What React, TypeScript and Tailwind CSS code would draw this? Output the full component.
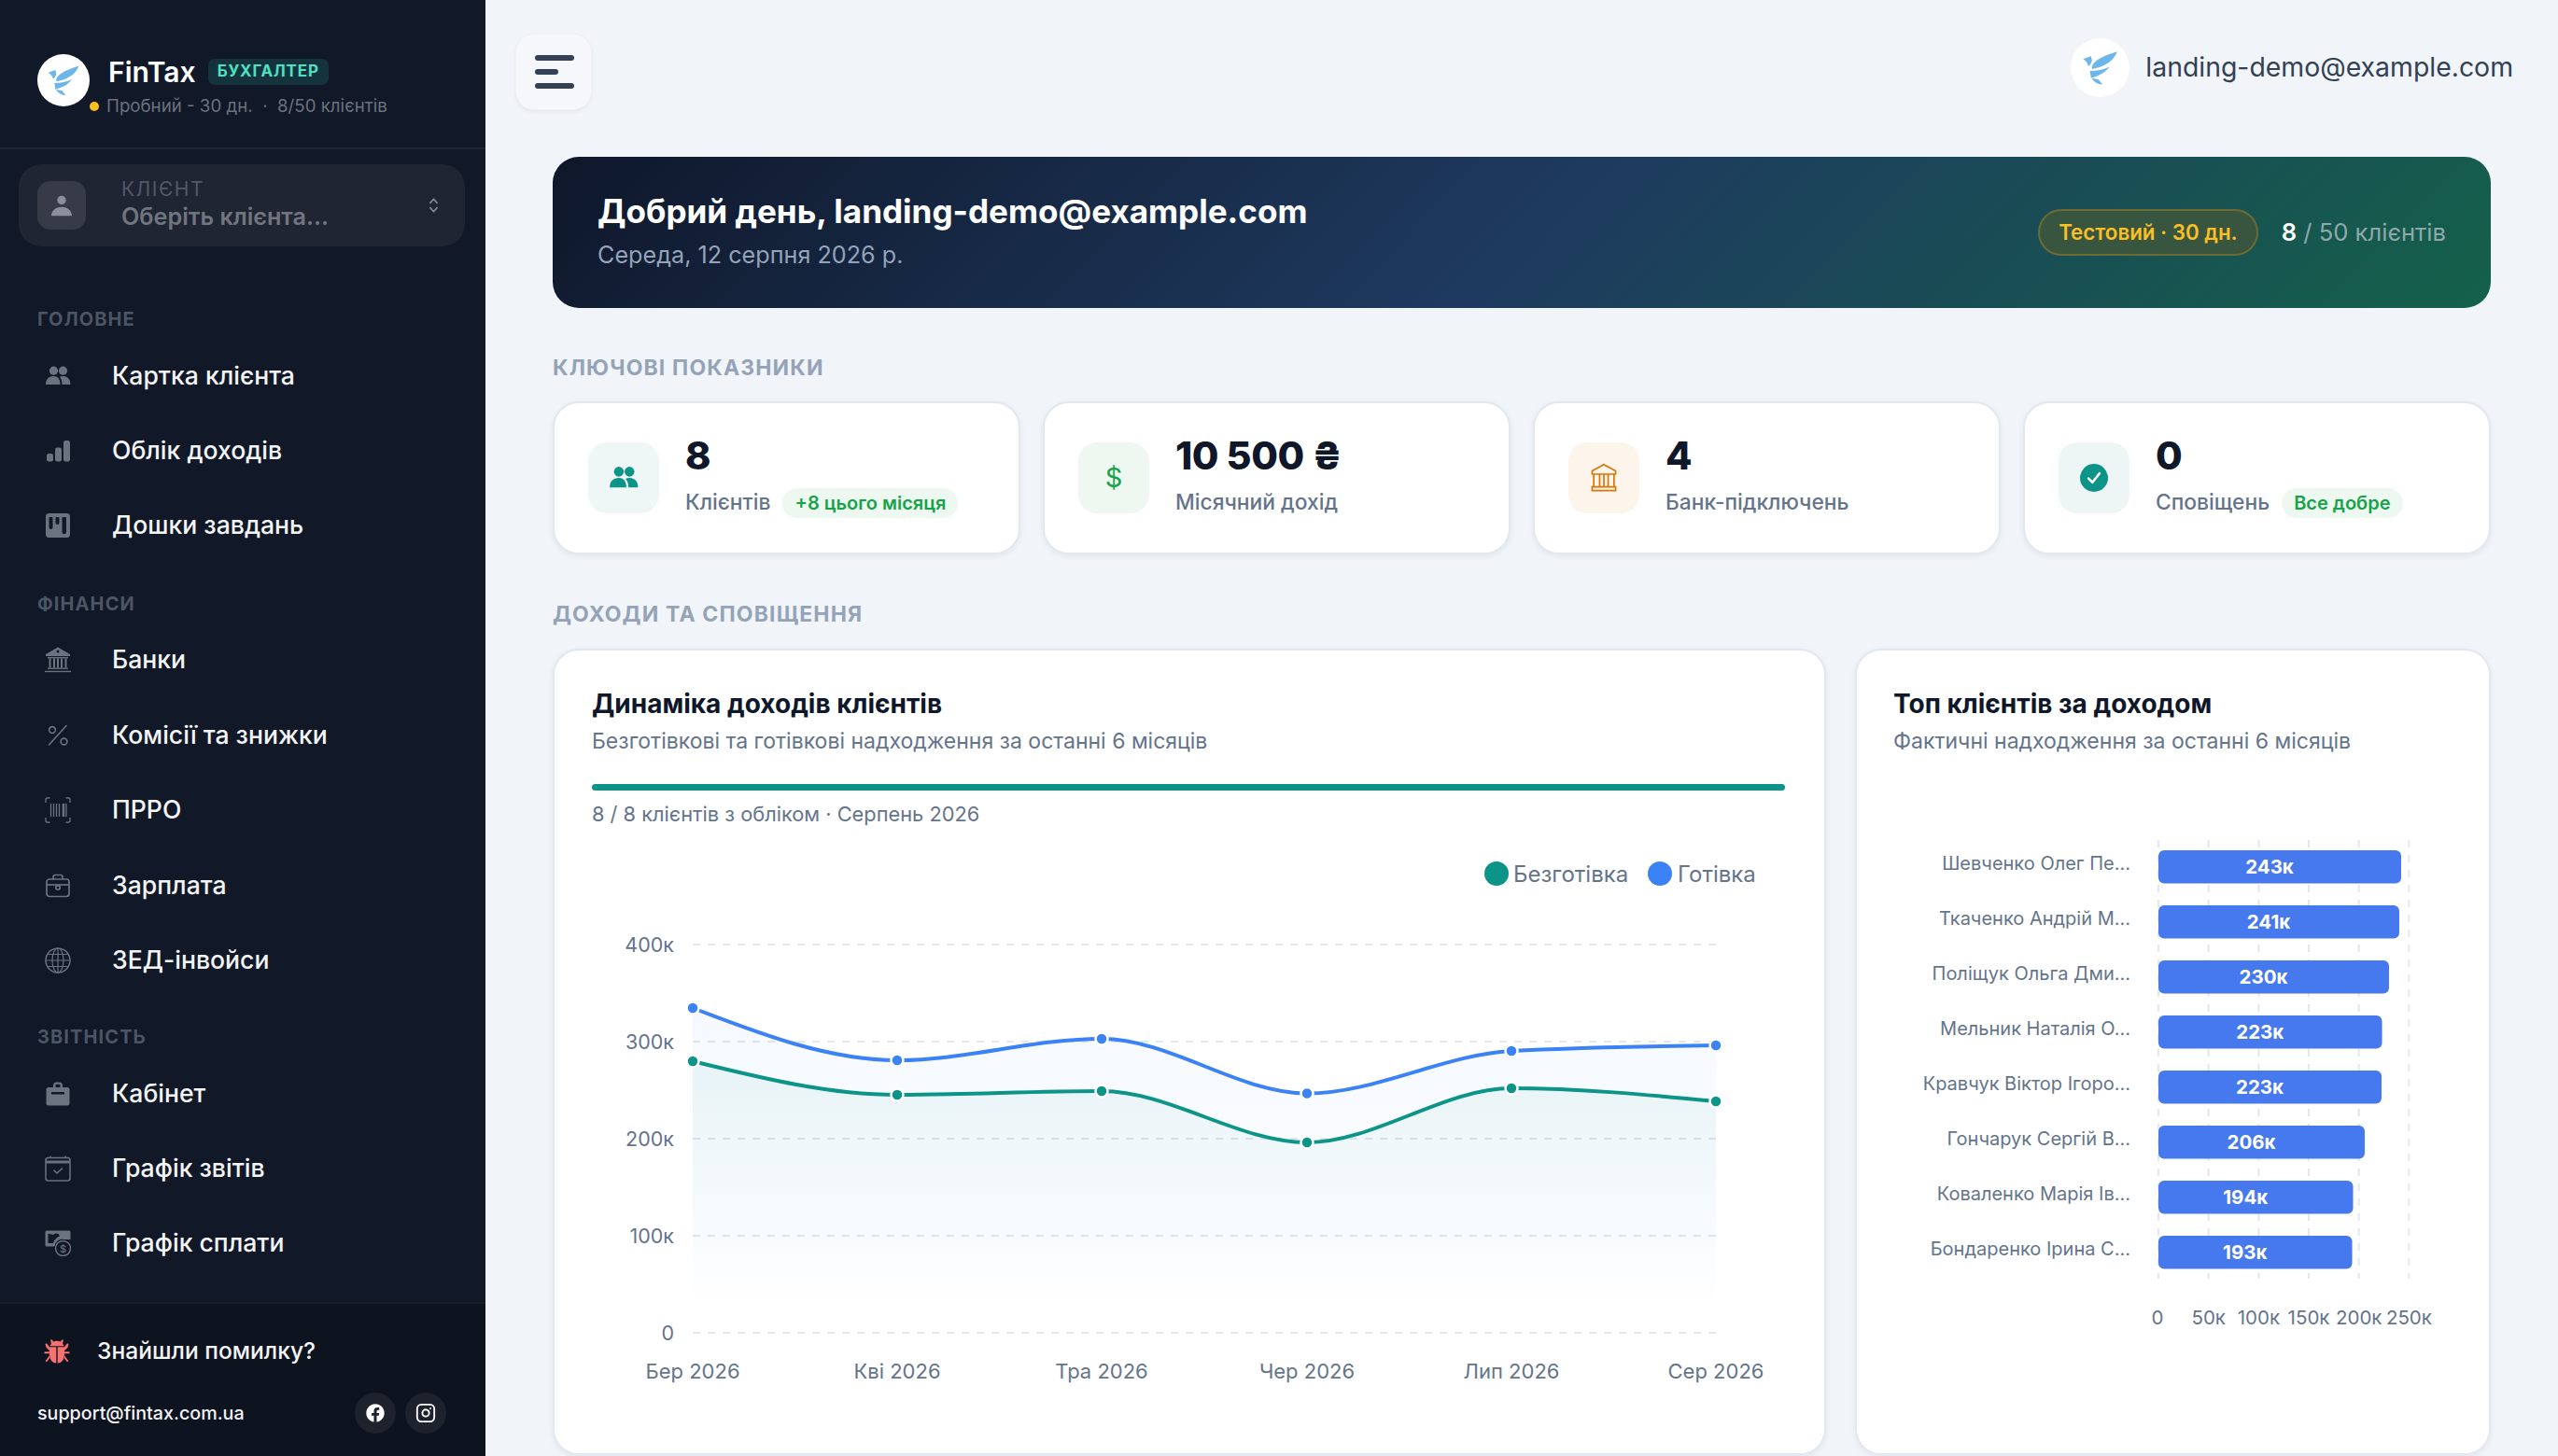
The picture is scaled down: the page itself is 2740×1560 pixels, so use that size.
import React from "react";
import { FaFacebook } from "react-icons/fa";
import { Instagram } from "lucide-react";

type IconProps = { className?: string };

const Logo = ({ className }: IconProps) => (
  <svg viewBox="30 24 168 168" className={className}>
    <circle cx="114" cy="108" r="84" fill="#ffffff" />
    <g fill="#6cb6e9">
      <path d="M65 83 L88 75 L91 88 C89 96 85 101 80 104 C80 96 74 88 65 83Z" />
      <path d="M163 62 C153 88 130 104 91 112 C88 96 106 79 163 62Z" />
      <path d="M141 105 C127 124 110 131 88 137 L85 117 C105 117 125 113 141 105Z" />
      <path d="M90 138 L109 141 L121 156 C108 156 97 150 90 138Z" />
    </g>
  </svg>
);

const People = ({ className }: IconProps) => (
  <svg viewBox="0 0 28 28" fill="currentColor" className={className}>
    <circle cx="9.5" cy="8.2" r="4.6" />
    <circle cx="19.5" cy="8.2" r="4.6" />
    <path d="M1 23 C1 17 4.5 14 9.5 14 C14.5 14 16.5 18 16.5 23Z" />
    <path d="M18.5 23 C18.5 19 17.5 16.5 15.8 14.8 C17 14.2 18.2 14 19.5 14 C24 14 27.5 17 27.5 23Z" />
  </svg>
);

const Bars = ({ className }: IconProps) => (
  <svg viewBox="0 0 28 28" fill="currentColor" className={className}>
    <rect x="2" y="17" width="7" height="8.5" rx="2.2" />
    <rect x="11" y="10.5" width="7" height="15" rx="2.2" />
    <rect x="20" y="3" width="7" height="22.5" rx="2.2" />
  </svg>
);

const Kanban = ({ className }: IconProps) => (
  <svg viewBox="0 0 28 28" fill="currentColor" className={className}>
    <path
      fillRule="evenodd"
      d="M4.5 1 H23.5 A3.5 3.5 0 0 1 27 4.500 V23.5 A3.500 3.500 0 0 1 23.500 27 H4.500 A3.500 3.500 0 0 1 1 23.500 V4.500 A3.500 3.500 0 0 1 4.500 1Z M5.500 5 A1 1 0 0 0 4.500 6 V16 A1.500 1.500 0 0 0 8.500 16 V6 A1 1 0 0 0 7.500 5Z M12.500 5 A1 1 0 0 0 11.500 6 V11 A1.500 1.500 0 0 0 15.500 11 V6 A1 1 0 0 0 14.500 5Z M19.500 5 A1 1 0 0 0 18.500 6 V21 A1.500 1.500 0 0 0 23 21 V6 A1 1 0 0 0 22 5Z"
    />
  </svg>
);

const BankFilled = ({ className }: IconProps) => (
  <svg viewBox="0 0 28 28" fill="currentColor" className={className}>
    <path
      fillRule="evenodd"
      d="M14 0.500 L27 8 V10 H1 V8Z M14 3.500 A1.500 1.500 0 1 0 14 6.500 A1.500 1.500 0 1 0 14 3.500Z"
    />
    <rect x="3" y="11" width="22" height="1.400" />
    <rect x="4.500" y="12.500" width="2" height="10" />
    <rect x="9" y="12.500" width="2" height="10" />
    <rect x="13" y="12.500" width="2" height="10" />
    <rect x="17" y="12.500" width="2" height="10" />
    <rect x="21.500" y="12.500" width="2" height="10" />
    <rect x="3" y="22.500" width="22" height="1.400" />
    <rect x="0" y="25.800" width="28" height="1.400" />
  </svg>
);

const Percent = ({ className }: IconProps) => (
  <svg viewBox="0 0 28 28" fill="none" stroke="currentColor" strokeWidth="1.600" className={className}>
    <circle cx="8" cy="8" r="3.400" />
    <circle cx="20.500" cy="20.500" r="3.400" />
    <path d="M23 3.500 L4.500 24" strokeLinecap="round" />
  </svg>
);

const Barcode = ({ className }: IconProps) => (
  <svg viewBox="0 0 28 28" fill="none" stroke="currentColor" strokeWidth="1.300" className={className}>
    <path d="M5.500 1 H2.500 A1.500 1.500 0 0 0 1 2.500 V6" />
    <path d="M22.500 1 H25.500 A1.500 1.500 0 0 1 27 2.500 V6" />
    <path d="M5.500 27 H2.500 A1.500 1.500 0 0 1 1 25.500 V22" />
    <path d="M22.500 27 H25.500 A1.500 1.500 0 0 0 27 25.500 V22" />
    <path d="M6.500 7 V21 M9.500 7 V21 M12.500 7 V21 M15.500 7 V21" />
    <path d="M20 7 V21" strokeWidth="2.600" />
    <path d="M23 7 V21" />
  </svg>
);

const Case = ({ className }: IconProps) => (
  <svg viewBox="0 0 28 28" fill="none" stroke="currentColor" strokeWidth="1.700" className={className}>
    <rect x="2" y="7" width="24" height="18.500" rx="3" />
    <path d="M9 7 V4.500 A2 2 0 0 1 11 2.500 H17 A2 2 0 0 1 19 4.500 V7" />
    <path d="M2 13 H26" />
    <circle cx="14" cy="16" r="2.200" />
  </svg>
);

const Globe = ({ className }: IconProps) => (
  <svg viewBox="0 0 28 28" fill="none" stroke="currentColor" strokeWidth="1.200" className={className}>
    <circle cx="14" cy="14" r="13" strokeWidth="1.500" />
    <ellipse cx="14" cy="14" rx="6" ry="13" />
    <path d="M14 1 V27 M1 14 H27 M3 7.500 H25 M3 20.500 H25" />
  </svg>
);

const CaseFilled = ({ className }: IconProps) => (
  <svg viewBox="0 0 28 28" fill="currentColor" className={className}>
    <path
      fillRule="evenodd"
      d="M9 7 V5 A3.500 3.500 0 0 1 12.500 1.500 H15.500 A3.500 3.500 0 0 1 19 5 V7 H24 A2.500 2.500 0 0 1 26.500 9.500 V24 A2.500 2.500 0 0 1 24 26.500 H4 A2.500 2.500 0 0 1 1.500 24 V9.500 A2.500 2.500 0 0 1 4 7Z M11.500 7 H16.500 V5 A1.200 1.200 0 0 0 15.300 3.800 H12.700 A1.200 1.200 0 0 0 11.500 5Z M7 12 V14.500 H21 V12Z"
    />
  </svg>
);

const Calendar = ({ className }: IconProps) => (
  <svg viewBox="0 0 28 28" fill="none" stroke="currentColor" strokeWidth="1.500" className={className}>
    <rect x="1" y="2.500" width="26" height="24.500" rx="2.500" />
    <path d="M1 7 H27" strokeWidth="3" />
    <path d="M6 0.500 V3 M22 0.500 V3" />
    <path d="M10 16 L13 19 L18.500 14" strokeLinecap="round" strokeLinejoin="round" />
  </svg>
);

const Money = ({ className }: IconProps) => (
  <svg viewBox="0 0 28 28" className={className}>
    <path
      fill="currentColor"
      fillRule="evenodd"
      d="M2 0.500 H26 A1.500 1.500 0 0 1 27.500 2 V10 H20 A8 8 0 0 0 10.500 17.500 H2 A1.500 1.500 0 0 1 0.500 16 V2 A1.500 1.500 0 0 1 2 0.500Z M3.500 4 V14 H9 C10 10 13 7.500 16 6.500 A4 4 0 0 0 9 5 C8 4.500 5 4 3.500 4Z"
    />
    <circle cx="19.500" cy="19.500" r="8" fill="none" stroke="currentColor" strokeWidth="1.400" />
    <text x="19.500" y="23.500" textAnchor="middle" fontSize="11" fill="currentColor" fontFamily="Inter">$</text>
  </svg>
);

const Bug = ({ className }: IconProps) => (
  <svg viewBox="0 0 28 28" fill="currentColor" className={className}>
    <path d="M8 7 L7 2.500 L9 2.500 L10 4.500 C12 3.500 16 3.500 18 4.500 L19 2.500 L21 2.500 L20 7 C20.800 7.500 21.300 8 21.500 9.300 H6.500 C6.700 8 7.200 7.500 8 7Z" />
    <path d="M6 10.200 H13.300 V27.500 C8.500 27.500 6 23 6 18Z" />
    <path d="M14.700 10.200 H22 V18 C22 23 19.500 27.500 14.700 27.500Z" />
    <path d="M1.500 7 L3 6.300 L6 10.500 V14 L2.500 10.800Z M0.500 15.200 H6 V17.300 H0.500Z M6 19.300 V22.500 L3 26.300 L1.600 25.300Z" />
    <path d="M26.500 7 L25 6.300 L22 10.500 V14 L25.500 10.800Z M27.500 15.200 H22 V17.300 H27.500Z M22 19.300 V22.500 L25 26.300 L26.400 25.300Z" />
  </svg>
);

const BankLine = ({ className }: IconProps) => (
  <svg viewBox="0 0 28 28" fill="none" stroke="currentColor" strokeWidth="1.500" className={className}>
    <path d="M14 1.500 L25 7.500 V10.500 H3 V7.500Z" strokeLinejoin="round" />
    <path d="M4.500 10.500 V22 M23.500 10.500 V22 M10 10.500 V22 M14 10.500 V22 M18 10.500 V22" />
    <path d="M3 22.500 H25 V26 H3Z" />
  </svg>
);

const Check = ({ className }: IconProps) => (
  <svg viewBox="0 0 28 28" className={className}>
    <circle cx="14" cy="14" r="14" fill="currentColor" />
    <path d="M8.500 14.500 L12.500 18.500 L19.500 9.500" fill="none" stroke="#fff" strokeWidth="2.400" strokeLinecap="round" strokeLinejoin="round" />
  </svg>
);

const NavItem = ({ icon, label, tall }: { icon: React.ReactNode; label: string; tall?: boolean }) => (
  <div className={`${tall ? "h-[80.5px]" : "h-[80px]"} flex items-center pl-[48px] gap-[44px] text-[#f3f4f6] text-[26.6px] font-medium shrink-0`}>
    <span className="w-[28px] h-[28px] text-[#6b7280] flex items-center justify-center shrink-0">{icon}</span>
    <span>{label}</span>
  </div>
);

const SectionLabel = ({ children, className }: { children: string; className: string }) => (
  <div className={`${className} flex items-end pl-[40px] text-[20px] leading-[24px] font-bold tracking-[1.1px] text-[#4b5563] shrink-0`}>
    {children}
  </div>
);

const ic = "w-[28px] h-[28px]";

const Sidebar = () => (
  <aside className="w-[520px] h-full shrink-0 bg-[#111827] flex flex-col">
    <div className="h-[160px] shrink-0 border-b-2 border-[#1f2531] pl-[40px] flex items-start pt-[58px] relative">
      <Logo className="w-[56px] h-[56px] shrink-0" />
      <div className="ml-[20px]">
        <div className="flex items-center h-[38px]">
          <span className="text-[30px] leading-[38px] font-semibold text-white">FinTax</span>
          <span className="ml-[13px] h-[28px] px-[10px] rounded-[7px] bg-[#15333c] text-[#4fe0c4] text-[17px] font-bold tracking-[0.8px] flex items-center">
            БУХГАЛТЕР
          </span>
        </div>
        <div className="flex items-center text-[18.7px] leading-[30px] text-[#6b7280] -ml-[20px] mt-[3px]">
          <span className="w-[10px] h-[10px] rounded-full bg-[#fbbf24] mr-[8px]" />
          <span className="whitespace-pre">Пробний - 30 дн.  ·  8/50 клієнтів</span>
        </div>
      </div>
    </div>

    <div className="ml-[20px] mr-[22px] mt-[16px] h-[88px] shrink-0 rounded-[24px] bg-[#1f2532] flex items-center pl-[20px] pr-[28px]">
      <div className="w-[52px] h-[52px] rounded-[14px] bg-[#363b47] flex items-center justify-center text-[#8b8f99]">
        <svg viewBox="0 0 28 28" fill="currentColor" className="w-[26px] h-[26px]">
          <circle cx="14" cy="8" r="5" />
          <path d="M2 26 C3 19 8 16 14 16 C20 16 25 19 26 26Z" />
        </svg>
      </div>
      <div className="ml-[38px] flex-1">
        <div className="text-[21px] leading-[24px] tracking-[1.5px] text-[#525866]">КЛІЄНТ</div>
        <div className="text-[25.2px] leading-[34px] font-semibold text-[#71757f]">Оберіть клієнта...</div>
      </div>
      <svg viewBox="0 0 12 20" fill="none" stroke="#7e828c" strokeWidth="2" className="w-[11px] h-[18px]" strokeLinecap="round" strokeLinejoin="round">
        <path d="M2 7 L6 2.500 L10 7 M2 13 L6 17.500 L10 13" />
      </svg>
    </div>

    <SectionLabel className="h-[99px] pb-[9px]">ГОЛОВНЕ</SectionLabel>
    <NavItem icon={<People className={ic} />} label="Картка клієнта" />
    <NavItem icon={<Bars className={ic} />} label="Облік доходів" />
    <NavItem icon={<Kanban className={ic} />} label="Дошки завдань" />

    <SectionLabel className="h-[64px] pb-[8px]">ФІНАНСИ</SectionLabel>
    <NavItem tall icon={<BankFilled className={ic} />} label="Банки" />
    <NavItem tall icon={<Percent className={ic} />} label="Комісії та знижки" />
    <NavItem tall icon={<Barcode className={ic} />} label="ПРРО" />
    <NavItem tall icon={<Case className={ic} />} label="Зарплата" />
    <NavItem tall icon={<Globe className={ic} />} label="ЗЕД-інвойси" />

    <SectionLabel className="h-[62px] pb-[9px]">ЗВІТНІСТЬ</SectionLabel>
    <NavItem icon={<CaseFilled className={ic} />} label="Кабінет" />
    <NavItem icon={<Calendar className={ic} />} label="Графік звітів" />
    <NavItem icon={<Money className={ic} />} label="Графік сплати" />

    <div className="mt-auto h-[165px] shrink-0 border-t-2 border-[#1c2029] bg-[#0e1320] pl-[40px] pr-[42px] pt-[28px]">
      <div className="flex items-center h-[44px] pl-[7px] gap-[29px] text-[24.6px] font-medium text-[#f3f4f6]">
        <Bug className="w-[28px] h-[28px] text-[#f87171]" />
        <span>Знайшли помилку?</span>
      </div>
      <div className="flex items-center mt-[23px] h-[44px]">
        <span className="text-[19.7px] font-medium text-[#f3f4f6] pt-[2px]">support@fintax.com.ua</span>
        <div className="ml-auto flex gap-[10px]">
          <span className="w-[44px] h-[44px] rounded-full bg-[#1d222d] flex items-center justify-center text-white">
            <FaFacebook className="w-[20px] h-[20px]" />
          </span>
          <span className="w-[44px] h-[44px] rounded-full bg-[#1d222d] flex items-center justify-center text-white">
            <Instagram className="w-[22px] h-[22px]" />
          </span>
        </div>
      </div>
    </div>
  </aside>
);

const Stat = ({
  icon,
  box,
  value,
  label,
  pill,
}: {
  icon: React.ReactNode;
  box: string;
  value: string;
  label: string;
  pill?: string;
}) => (
  <div className="h-[164px] rounded-[28px] bg-white border-2 border-[#e2e8f0] shadow-[0_2px_6px_rgba(15,23,42,0.07)] flex items-center pl-[36px]">
    <div className={`${box} w-[76px] h-[76px] rounded-[20px] flex items-center justify-center shrink-0`}>{icon}</div>
    <div className="ml-[28px] pb-[7px]">
      <div className="text-[41.5px] leading-[50px] font-extrabold text-[#0f172a] tracking-[-0.5px]">{value}</div>
      <div className="flex items-center h-[32px] mt-[10px]">
        <span className="text-[22.8px] font-medium text-[#64748b]">{label}</span>
        {pill && (
          <span className="ml-[13px] h-[32px] px-[13px] rounded-full bg-[#edf8f0] text-[#16a34a] text-[20px] font-semibold flex items-center">
            {pill}
          </span>
        )}
      </div>
    </div>
  </div>
);

function monotonePath(xs: number[], ys: number[]) {
  const n = xs.length;
  const h = xs.slice(1).map((x, i) => x - xs[i]);
  const s = h.map((hi, i) => (ys[i + 1] - ys[i]) / hi);
  const t: number[] = new Array(n).fill(0);
  for (let i = 1; i < n - 1; i++) {
    const p = (s[i - 1] * h[i] + s[i] * h[i - 1]) / (h[i - 1] + h[i]);
    t[i] = (Math.sign(s[i - 1]) + Math.sign(s[i])) * Math.min(Math.abs(s[i - 1]), Math.abs(s[i]), 0.5 * Math.abs(p));
  }
  t[0] = (3 * s[0] - t[1]) / 2;
  t[n - 1] = (3 * s[n - 2] - t[n - 2]) / 2;
  let d = `M${xs[0]},${ys[0]}`;
  for (let i = 0; i < n - 1; i++) {
    const dx = h[i] / 3;
    d += ` C${xs[i] + dx},${ys[i] + dx * t[i]} ${xs[i + 1] - dx},${ys[i + 1] - dx * t[i + 1]} ${xs[i + 1]},${ys[i + 1]}`;
  }
  return d;
}

const xs = [742, 961, 1180, 1400, 1619, 1838];
const blue = [1080, 1136, 1113, 1171.5, 1126, 1120];
const green = [1137, 1173, 1169, 1224, 1166, 1180];
const months = ["Бер 2026", "Кві 2026", "Тра 2026", "Чер 2026", "Лип 2026", "Сер 2026"];
const yTicks: [string, number][] = [
  ["400к", 1012],
  ["300к", 1116],
  ["200к", 1220],
  ["100к", 1324],
  ["0", 1428],
];

const LineChart = () => {
  const bluePath = monotonePath(xs, blue);
  const greenPath = monotonePath(xs, green);
  return (
    <svg viewBox="634 900 1278 600" className="w-[1278px] h-[600px] block" fontFamily="Inter">
      <defs>
        <linearGradient id="gb" x1="0" y1="0" x2="0" y2="1">
          <stop offset="0%" stopColor="#3b82f6" stopOpacity="0.05" />
          <stop offset="100%" stopColor="#3b82f6" stopOpacity="0" />
        </linearGradient>
        <linearGradient id="gg" x1="0" y1="0" x2="0" y2="1">
          <stop offset="0%" stopColor="#0d9488" stopOpacity="0.065" />
          <stop offset="85%" stopColor="#0d9488" stopOpacity="0" />
        </linearGradient>
      </defs>
      <circle cx="1603" cy="936" r="13" fill="#0d9488" />
      <text x="1621" y="945" fontSize="24" fill="#64748b">Безготівка</text>
      <circle cx="1778" cy="936" r="13" fill="#3b82f6" />
      <text x="1797" y="945" fontSize="24" fill="#64748b">Готівка</text>
      {yTicks.map(([l, y]) => (
        <g key={l}>
          <line x1="742" x2="1838" y1={y} y2={y} stroke="#e2e8f0" strokeWidth="2" strokeDasharray="8 8" />
          <text x="722" y={y + 8} textAnchor="end" fontSize="21.500" fill="#64748b">{l}</text>
        </g>
      ))}
      <path d={`${bluePath} L1838,1428 L742,1428 Z`} fill="url(#gb)" />
      <path d={`${greenPath} L1838,1428 L742,1428 Z`} fill="url(#gg)" />
      <path d={bluePath} fill="none" stroke="#3b82f6" strokeWidth="4" />
      <path d={greenPath} fill="none" stroke="#0d9488" strokeWidth="4" />
      {xs.map((x, i) => (
        <g key={x}>
          <circle cx={x} cy={blue[i]} r="6.500" fill="#3b82f6" stroke="#fff" strokeWidth="2.500" />
          <circle cx={x} cy={green[i]} r="6.500" fill="#0d9488" stroke="#fff" strokeWidth="2.500" />
          <text x={x} y="1477" textAnchor="middle" fontSize="22" fill="#64748b">{months[i]}</text>
        </g>
      ))}
    </svg>
  );
};

const rows: [string, string, number][] = [
  ["Шевченко Олег Пе...", "243к", 260],
  ["Ткаченко Андрій М...", "241к", 258],
  ["Поліщук Ольга Дми...", "230к", 247],
  ["Мельник Наталія О...", "223к", 239.500],
  ["Кравчук Віктор Ігоро...", "223к", 239],
  ["Гончарук Сергій В...", "206к", 221],
  ["Коваленко Марія Ів...", "194к", 208.500],
  ["Бондаренко Ірина С...", "193к", 207.500],
];
const gridX = [2312, 2365.700, 2419.400, 2473, 2526.700, 2580.400];
const gridLabels = ["0", "50к", "100к", "150к", "200к", "250к"];

const BarChart = () => (
  <svg viewBox="2029 880 596 560" className="w-[596px] h-[560px] block" fontFamily="Inter">
    {gridX.map((x, i) => (
      <g key={x}>
        <line x1={x} x2={x} y1="900" y2="1370" stroke="#e2e8f0" strokeWidth="2" strokeDasharray="8 8" />
        <text x={i === 0 ? x - 1 : x} y="1419" textAnchor="middle" fontSize="20.500" fill="#64748b">{gridLabels[i]}</text>
      </g>
    ))}
    {rows.map(([name, val, w], i) => {
      const y = 911 + i * 59;
      return (
        <g key={name}>
          <text x="2282" y={y + 21} textAnchor="end" fontSize="20" fill="#64748b">{name}</text>
          <rect x="2312" y={y} width={w} height="35.500" rx="6" fill="#4678ee" />
          <text x={2312 + w / 2 - 11} y={y + 25} textAnchor="middle" fontSize="20.500" fontWeight="700" fill="#fff">{val}</text>
        </g>
      );
    })}
  </svg>
);

const PanelHead = ({ title, sub }: { title: string; sub: string }) => (
  <>
    <div className="text-[28px] leading-[38px] font-bold text-[#0f172a]">{title}</div>
    <div className="text-[23px] leading-[34px] mt-[4px] text-[#64748b]">{sub}</div>
  </>
);

const Heading = ({ children, className }: { children: string; className: string }) => (
  <div className={`${className} text-[23px] leading-[28px] font-bold tracking-[1.15px] text-[#94a3b8]`}>{children}</div>
);

export default function App() {
  return (
    <div className="w-[2740px] h-[1560px] overflow-hidden flex bg-[#f1f5f9] font-['Inter',sans-serif]">
      <Sidebar />
      <main className="flex-1 min-w-0 h-full flex flex-col">
        <div className="pt-[36px] pl-[32px] pr-[48px] flex items-start justify-between shrink-0">
          <button className="w-[82px] h-[82px] rounded-[20px] bg-[#f5f7fb] border border-[#eef1f6] shadow-[0_2px_4px_rgba(15,23,42,0.06)] flex flex-col justify-center items-start pl-[20px] gap-[9px]">
            <span className="w-[42px] h-[6px] rounded-full bg-[#334155]" />
            <span className="w-[25px] h-[6px] rounded-full bg-[#334155]" />
            <span className="w-[42px] h-[6px] rounded-full bg-[#334155]" />
          </button>
          <div className="flex items-center gap-[17px] mt-[4px] h-[64px]">
            <Logo className="w-[63px] h-[63px]" />
            <span className="text-[28.4px] text-[#334155]">landing-demo@example.com</span>
          </div>
        </div>

        <div className="px-[72px]">
          <div className="mt-[50px] h-[162px] rounded-[28px] bg-[linear-gradient(135deg,#0f172a_0%,#1e3a5f_50%,#14614a_100%)] flex items-center justify-between px-[48px]">
            <div className="pb-[6px]">
              <div className="text-[35.1px] leading-[46px] font-bold text-white">Добрий день, landing-demo@example.com</div>
              <div className="text-[25.2px] leading-[34px] mt-[7px] text-[#94a3b8]">Середа, 12 серпня 2026 р.</div>
            </div>
            <div className="flex items-center gap-[25px]">
              <span className="h-[50px] px-[20px] rounded-full border-2 border-[#6e6a34] bg-[#38563f] text-[#fbbf24] text-[22.3px] font-semibold flex items-center">
                Тестовий · 30 дн.
              </span>
              <span className="text-[25.6px] text-[#8fa9a8]">
                <b className="font-semibold text-white">8</b> / 50 клієнтів
              </span>
            </div>
          </div>

          <Heading className="mt-[50px]">КЛЮЧОВІ ПОКАЗНИКИ</Heading>
          <div className="grid grid-cols-4 gap-[24px] mt-[22px]">
            <Stat box="bg-[#eff7f6]" icon={<People className="w-[32px] h-[32px] text-[#0d9488]" />} value="8" label="Клієнтів" pill="+8 цього місяця" />
            <Stat box="bg-[#eef8f1]" icon={<span className="text-[29px] text-[#16a34a] font-normal">$</span>} value="10 500 ₴" label="Місячний дохід" />
            <Stat box="bg-[#fdf4ec]" icon={<BankLine className="w-[32px] h-[32px] text-[#d97706]" />} value="4" label="Банк-підключень" />
            <Stat box="bg-[#eef6f5]" icon={<Check className="w-[30px] h-[30px] text-[#0d9488]" />} value="0" label="Сповіщень" pill="Все добре" />
          </div>

          <Heading className="mt-[50px]">ДОХОДИ ТА СПОВІЩЕННЯ</Heading>
          <div className="grid grid-cols-[1364px_681px] gap-[31px] mt-[23px] h-[864px]">
            <div className="rounded-[28px] bg-white border-2 border-[#e2e8f0] shadow-[0_2px_6px_rgba(15,23,42,0.07)] pl-[40px] pr-[40px] pt-[38px] overflow-hidden">
              <PanelHead title="Динаміка доходів клієнтів" sub="Безготівкові та готівкові надходження за останні 6 місяців" />
              <div className="h-[7px] rounded-full bg-[#0d9488] mt-[29px] w-[1278px]" />
              <div className="text-[21.8px] leading-[30px] mt-[10px] text-[#64748b]">8 / 8 клієнтів з обліком · Серпень 2026</div>
              <div className="mt-[13px]">
                <LineChart />
              </div>
            </div>
            <div className="rounded-[28px] bg-white border-2 border-[#e2e8f0] shadow-[0_2px_6px_rgba(15,23,42,0.07)] pl-[39px] pr-[40px] pt-[38px]">
              <PanelHead title="Топ клієнтів за доходом" sub="Фактичні надходження за останні 6 місяців" />
              <div className="mt-[69px] ml-[1px]">
                <BarChart />
              </div>
            </div>
          </div>
        </div>
      </main>
    </div>
  );
}
